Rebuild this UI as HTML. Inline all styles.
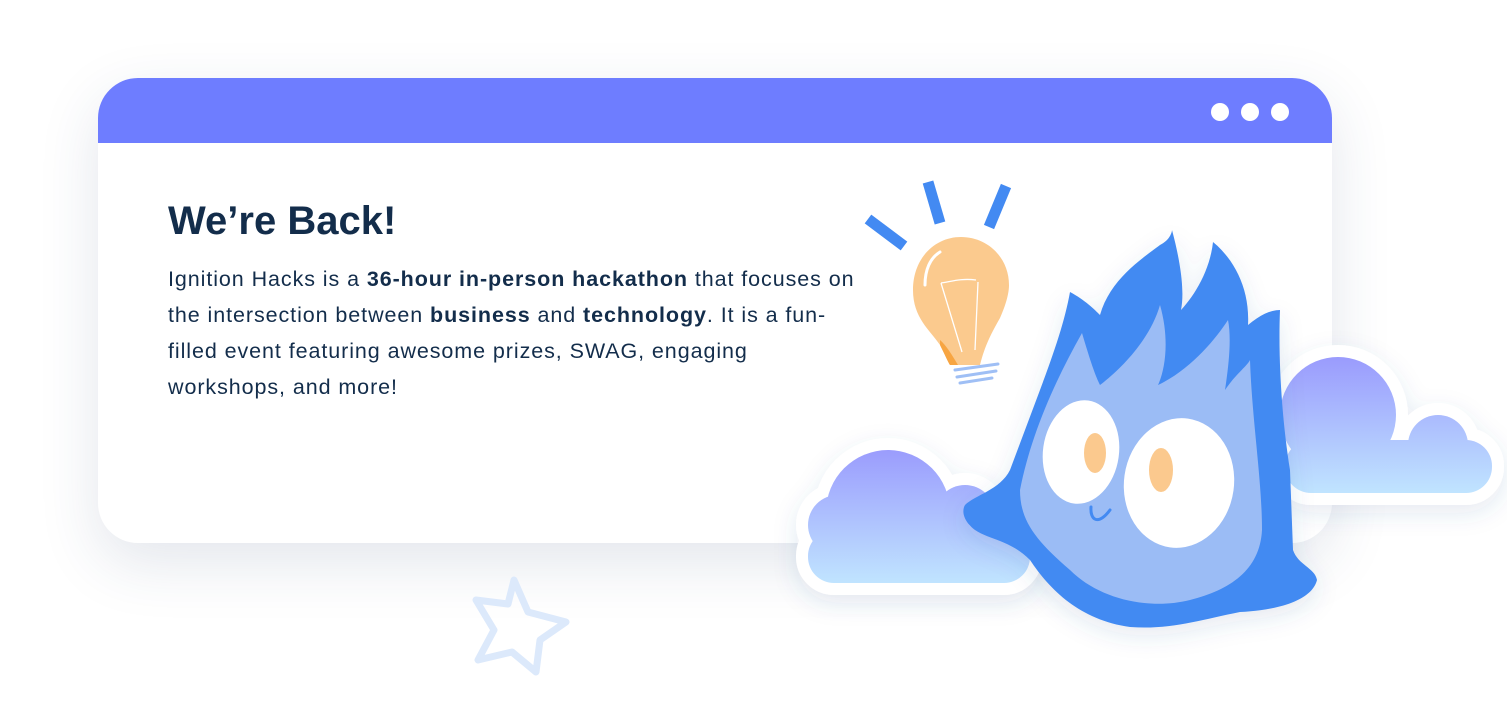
<!DOCTYPE html>
<html><head><style>
html,body{margin:0;padding:0;background:#fff;width:1507px;height:713px;overflow:hidden;position:relative}
.card{position:absolute;left:98px;top:78px;width:1234px;height:465px;border-radius:40px;background:#fff;box-shadow:0 20px 60px rgba(40,60,110,0.13);overflow:hidden}
.bar{height:65px;background:#6e7dff}
.dot{position:absolute;top:103px;width:18px;height:18px;border-radius:50%;background:#fff}
h1{position:absolute;left:168px;top:199px;margin:0;font:bold 40px "Liberation Sans",sans-serif;color:#132d4b;letter-spacing:0px}
.p{position:absolute;left:168px;top:261px;font:21.5px/36px "Liberation Sans",sans-serif;color:#132d4b;white-space:nowrap;letter-spacing:0.92px}
b{font-weight:bold}
svg{position:absolute;left:0;top:0}
</style></head><body>
<div class="card"><div class="bar"></div></div>
<div class="dot" style="left:1211px"></div><div class="dot" style="left:1241px"></div><div class="dot" style="left:1271px"></div>
<h1>We’re Back!</h1>
<div class="p">Ignition Hacks is a <b>36-hour in-person hackathon</b> that focuses on<br>the intersection between <b>business</b> and <b>technology</b>. It is a fun-<br>filled event featuring awesome prizes, SWAG, engaging<br>workshops, and more!</div>
<svg width="1507" height="713" viewBox="0 0 1507 713">
<defs>
<linearGradient id="cg1" gradientUnits="userSpaceOnUse" x1="0" y1="448" x2="0" y2="583"><stop offset="0" stop-color="#9a9bfd"/><stop offset="1" stop-color="#c0e4ff"/></linearGradient>
<linearGradient id="cg2" gradientUnits="userSpaceOnUse" x1="0" y1="357" x2="0" y2="493"><stop offset="0" stop-color="#9a9bfd"/><stop offset="1" stop-color="#c0e4ff"/></linearGradient>
<filter id="sh" x="-20%" y="-20%" width="140%" height="140%"><feDropShadow dx="0" dy="8" stdDeviation="12" flood-color="#3c5a96" flood-opacity="0.12"/></filter>
</defs>
<path d="M514,580 L528,612 L566,622 L540,640 L536,672 L512,652 L478,660 L494,630 L476,600 L508,604 Z" fill="none" stroke="#dce9fb" stroke-width="7" stroke-linejoin="round"/>
<g filter="url(#sh)" fill="#fff" stroke="#fff" stroke-width="24" stroke-linejoin="round">
<circle cx="888" cy="512" r="62"/><circle cx="838" cy="525" r="30"/><circle cx="965" cy="515" r="30"/><rect x="808" y="530" width="222" height="53" rx="26"/>
<circle cx="1338" cy="415" r="58"/><circle cx="1438" cy="445" r="30"/><rect x="1285" y="440" width="207" height="53" rx="26"/>
</g>
<g fill="url(#cg1)"><circle cx="888" cy="512" r="62"/><circle cx="838" cy="525" r="30"/><circle cx="965" cy="515" r="30"/><rect x="808" y="530" width="222" height="53" rx="26"/></g>
<g fill="url(#cg2)"><circle cx="1338" cy="415" r="58"/><circle cx="1438" cy="445" r="30"/><rect x="1285" y="440" width="207" height="53" rx="26"/></g>
<g stroke="#438af2" stroke-width="11"><line x1="868" y1="219" x2="904" y2="246"/><line x1="928" y1="182" x2="940" y2="223"/><line x1="1006" y1="186" x2="989" y2="227"/></g>
<path d="M961,237 C935,237 913,258 913,290 C913,318 930,330 940,345 C945,355 948,362 950,365 L980,365 C985,345 992,332 1000,318 C1008,300 1009,290 1009,285 C1009,258 988,237 961,237Z" fill="#fbca8e"/>
<path d="M940,345 C945,355 948,362 950,365 L958,365 C952,355 946,345 940,340Z" fill="#f7a542"/>
<path d="M941,283 L962,352 M978,282 L975,350 M941,283 C950,282 960,278 976,280" stroke="#fff" stroke-width="1.3" fill="none"/>
<path d="M925,285 C925,270 930,258 940,252" stroke="#fff" stroke-width="3" fill="none" stroke-linecap="round"/>
<g stroke="#9fbff5" stroke-width="3" fill="none" stroke-linecap="round"><path d="M955,370 L998,364"/><path d="M957,377 L996,371"/><path d="M960,383 L992,378"/></g>
<g filter="url(#sh)">
<path d="M965,505 C975,495 1000,490 1010,470 L1040,390 C1055,350 1065,320 1070,292 C1085,300 1095,310 1100,315 C1110,280 1140,260 1160,245 C1170,240 1172,232 1172,230 C1180,260 1185,290 1181,310 C1195,295 1210,270 1213,242 C1235,260 1250,290 1248,325 C1260,315 1270,310 1280,310 C1278,360 1282,420 1290,470 L1293,550 C1298,565 1315,568 1317,580 C1312,600 1280,610 1240,612 C1200,620 1170,630 1130,627 C1080,620 1050,590 1030,560 C1010,540 990,540 975,530 C962,520 962,510 965,505Z" fill="#438af2"/>
</g>
<path d="M1020,490 C1030,440 1050,390 1082,333 C1090,360 1095,375 1100,385 C1120,370 1150,340 1160,305 C1170,340 1165,370 1158,385 C1190,370 1215,340 1228,320 C1232,340 1228,370 1225,390 C1235,375 1248,365 1250,360 C1252,420 1262,480 1262,530 C1260,570 1230,590 1190,600 C1150,610 1100,600 1070,570 C1035,540 1020,520 1020,490Z" fill="#9bbcf5"/>
<ellipse cx="1081" cy="452" rx="38" ry="52" fill="#fff" transform="rotate(8 1081 452)"/>
<ellipse cx="1179" cy="483" rx="55" ry="65" fill="#fff" transform="rotate(8 1179 483)"/>
<ellipse cx="1095" cy="453" rx="11" ry="20" fill="#fbc98e"/>
<ellipse cx="1161" cy="470" rx="12" ry="22" fill="#fbc98e"/>
<path d="M1091,507 C1090,520 1098,526 1110,510" stroke="#438af2" stroke-width="3" fill="none" stroke-linecap="round"/>
</svg>
</body></html>
